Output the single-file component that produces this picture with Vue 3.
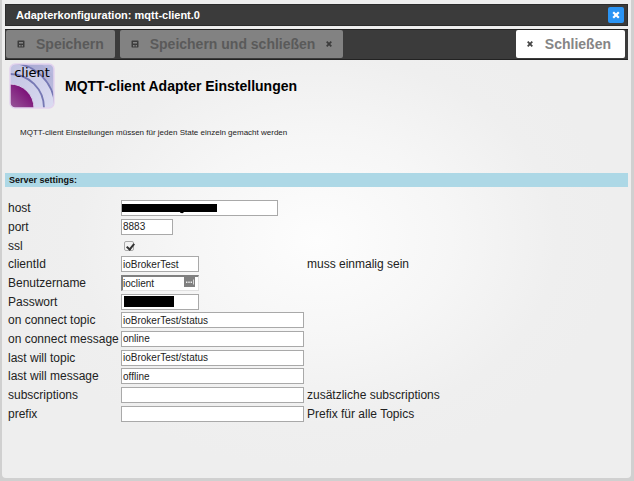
<script setup>
import { ref } from 'vue'

const fields = ref([
  { id: 'host', label: 'host', value: '', size: 'wide', mask: 'host' },
  { id: 'port', label: 'port', value: '8883', size: 'tiny' },
  { id: 'ssl', label: 'ssl', value: true, type: 'checkbox' },
  { id: 'clientId', label: 'clientId', value: 'ioBrokerTest', size: 'short', hint: 'muss einmalig sein' },
  { id: 'user', label: 'Benutzername', value: 'ioclient', size: 'short', manager: true },
  { id: 'pass', label: 'Passwort', value: '', size: 'short', type: 'password', mask: 'pass' },
  { id: 'onConnectTopic', label: 'on connect topic', value: 'ioBrokerTest/status', size: 'full' },
  { id: 'onConnectMessage', label: 'on connect message', value: 'online', size: 'full' },
  { id: 'lastWillTopic', label: 'last will topic', value: 'ioBrokerTest/status', size: 'full' },
  { id: 'lastWillMessage', label: 'last will message', value: 'offline', size: 'full' },
  { id: 'subscriptions', label: 'subscriptions', value: '', size: 'full', hint: 'zusätzliche subscriptions' },
  { id: 'prefix', label: 'prefix', value: '', size: 'full', hint: 'Prefix für alle Topics' }
])
</script>

<template>
  <div class="page">
    <section class="dialog">
      <header class="titlebar">
        <span>Adapterkonfiguration: mqtt-client.0</span>
        <button class="close" type="button" aria-label="Close">
          <svg width="8" height="8" viewBox="0 0 8 8"><path d="M1.2 1.2 6.8 6.8M6.8 1.2 1.2 6.8" stroke="#fff" stroke-width="2.2" /></svg>
        </button>
      </header>

      <div class="toolbar">
        <button class="tool" type="button" disabled>
          <svg class="icon" width="8" height="8" viewBox="0 0 8 8"><path d="M1 .5h6l.5.5v6l-.5.5H1L.5 7V1z" fill="#3c3c3c" /><path d="M2 2h4v1.6H2zM2 5h1.6v1.4H2zM4.6 5H6v1.4H4.6z" fill="#858585" /></svg>
          <span>Speichern</span>
        </button>
        <button class="tool" type="button" disabled>
          <svg class="icon" width="8" height="8" viewBox="0 0 8 8"><path d="M1 .5h6l.5.5v6l-.5.5H1L.5 7V1z" fill="#3c3c3c" /><path d="M2 2h4v1.6H2zM2 5h1.6v1.4H2zM4.6 5H6v1.4H4.6z" fill="#858585" /></svg>
          <span>Speichern und schließen</span>
          <svg class="icon" width="6" height="6" viewBox="0 0 6 6"><path d="M.7.7 5.3 5.3M5.3.7.7 5.3" stroke="#3c3c3c" stroke-width="1.8" /></svg>
        </button>
        <button class="tool leave" type="button">
          <svg class="icon" width="6" height="6" viewBox="0 0 6 6"><path d="M.7.7 5.3 5.3M5.3.7.7 5.3" stroke="#444" stroke-width="1.8" /></svg>
          <span>Schließen</span>
        </button>
      </div>

      <main class="content">
        <div class="heading">
          <svg class="logo" width="46" height="46" viewBox="0 0 46 46" role="img" aria-label="client">
            <defs>
              <clipPath id="tile"><rect x="1" y="1" width="44" height="44" rx="5" /></clipPath>
              <linearGradient id="outer" x1="0" y1="0" x2="1" y2="1">
                <stop offset="0" stop-color="#8f90c4" /><stop offset="1" stop-color="#d4d4ec" />
              </linearGradient>
              <linearGradient id="band" gradientUnits="userSpaceOnUse" x1="0" y1="8" x2="46" y2="46">
                <stop offset="0" stop-color="#c2c3e2" /><stop offset="1" stop-color="#dcddf2" />
              </linearGradient>
              <linearGradient id="core" gradientUnits="userSpaceOnUse" x1="1" y1="45" x2="18" y2="28">
                <stop offset="0" stop-color="#98589a" /><stop offset="1" stop-color="#7c1078" />
              </linearGradient>
            </defs>
            <g clip-path="url(#tile)">
              <rect width="46" height="46" fill="#b8b9de" />
              <circle cx="1" cy="45" r="54" fill="url(#outer)" />
              <circle cx="1" cy="45" r="45" fill="url(#band)" stroke="#7678b4" stroke-width="1.8" />
              <circle cx="1" cy="45" r="34" fill="url(#band)" stroke="#7678b4" stroke-width="1.8" />
              <circle cx="1" cy="45" r="24" fill="url(#core)" stroke="#d5cfe8" stroke-width="1" />
            </g>
            <rect x="1" y="1" width="44" height="44" rx="5" fill="none" stroke="#e3d3ee" stroke-width="1.5" />
            <text x="23" y="14" text-anchor="middle" class="logo-text">client</text>
          </svg>
          <h1>MQTT-client Adapter Einstellungen</h1>
        </div>

        <p class="note">MQTT-client Einstellungen müssen für jeden State einzeln gemacht werden</p>

        <h2>Server settings:</h2>

        <form class="settings" @submit.prevent>
          <div v-for="f in fields" :key="f.id" class="row">
            <label :for="f.id">{{ f.label }}</label>
            <div class="control">
              <input v-if="f.type === 'checkbox'" :id="f.id" v-model="f.value" class="check" type="checkbox" />
              <input v-else :id="f.id" v-model="f.value" :type="f.type || 'text'" class="box" :class="[f.size, { inset: f.manager }]" autocomplete="off" />
              <svg v-if="f.mask === 'host'" class="mask-host" width="95" height="10" viewBox="0 0 95 10"><path d="M0 0h95v8H62q-1 2-4 .5V8H0z" /></svg>
              <svg v-if="f.mask === 'pass'" class="mask-pass" width="50" height="11" viewBox="0 0 50 11"><path d="M0 0h50v11H0z" /></svg>
              <svg v-if="f.manager" class="manager" width="11" height="10" viewBox="0 0 11 10"><path d="M0 0h11v10H0z" fill="#808080" /><path d="M2 4.5h1.4v1.4H2zM4.3 4.5h1.4v1.4H4.3zM6.6 4.5H8v1.4H6.6zM9 2.5h.8v5H9z" fill="#eee" /></svg>
            </div>
            <span class="hint">{{ f.hint }}</span>
          </div>
        </form>
      </main>
    </section>
  </div>
</template>

<style>
body {
  margin: 0;
  background: #d0d0d0;
}
</style>

<style scoped>
* {
  box-sizing: border-box;
}

.page {
  display: flex;
  min-height: 100vh;
  padding: 0 3px 3px 2px;
  background: #d0d0d0;
  font-family: "Liberation Sans", Arial, sans-serif;
  color: #222;
}

.dialog {
  display: flex;
  flex: 1;
  flex-direction: column;
  padding: 4px 3px;
  border-radius: 0 0 4px 4px;
  background: radial-gradient(ellipse 300px 230px at 50% 50%, #fdfdfd, #f6f6f6 45%, #efefef 80%, #eee);
}

.titlebar {
  display: flex;
  align-items: center;
  justify-content: space-between;
  height: 22px;
  padding: 0 3px 0 10px;
  border: 1px solid #2c2c2c;
  background: #3b3b3b;
  color: #fff;
  font-size: 11px;
  font-weight: bold;
}

.close {
  display: flex;
  align-items: center;
  justify-content: center;
  width: 16px;
  height: 16px;
  padding: 0;
  border: 0;
  border-radius: 2px;
  background: #2a94f4;
}

.toolbar {
  display: flex;
  gap: 5px;
  margin-top: 3px;
  padding: 0 3px 1px 1px;
  background: #3b3b3b;
  border-top: 1px solid #222;
  border-bottom: 1px solid #222;
}

.tool {
  display: flex;
  align-items: center;
  gap: 11px;
  height: 28px;
  padding: 0 11px;
  border: 0;
  border-radius: 2px;
  background: #828282;
  color: #5a5a5a;
  font-family: inherit;
  font-size: 14px;
  font-weight: bold;
}

.icon {
  flex: none;
}

.leave {
  gap: 12px;
  margin-left: auto;
  padding-right: 14px;
  background: #fff;
  color: #858585;
}

.content {
  flex: 1;
}

.heading {
  display: flex;
  align-items: center;
  gap: 10px;
  padding: 3px 4px 0;
}

.logo-text {
  font-family: "DejaVu Sans", sans-serif;
  font-size: 13px;
  fill: #000;
}

h1 {
  margin: 0;
  color: #000;
  font-size: 14px;
  line-height: 20px;
}

.note {
  margin: 18px 0 0 15px;
  font-size: 8px;
  line-height: 12px;
}

h2 {
  margin: 34px 0 0;
  padding: 0 4px;
  background: #add8e6;
  color: #111;
  font-size: 9px;
  line-height: 14px;
}

.settings {
  display: grid;
  grid-auto-rows: 1fr;
  min-height: 224px;
  margin-top: 12px;
  padding: 0 3px;
  font-size: 12px;
}

.row {
  display: grid;
  grid-template-columns: 110px 183px 1fr;
  gap: 3px;
  align-items: center;
}

.row label {
  white-space: nowrap;
}

.control {
  display: flex;
  position: relative;
}

.box {
  height: 16px;
  padding: 0 1px;
  border: 1px solid #a9a9a9;
  background: #fff;
  color: #222;
  font-family: inherit;
  font-size: 10px;
}

.tiny { width: 52px; }
.short { width: 78px; }
.wide { width: 157px; }
.full { width: 183px; }

.inset {
  border-width: 2px 1px 1px 2px;
  border-color: #808080 #e0e0e0 #e0e0e0 #808080;
  padding: 0;
}

.check {
  width: 10px;
  height: 10px;
  margin: 0 3px;
  appearance: none;
  border: 1px solid #aaa;
  border-radius: 2px;
  background: #f2f2f2;
  position: relative;
}

.check:checked::after {
  content: "";
  position: absolute;
  left: 3px;
  top: 0;
  width: 3px;
  height: 6px;
  border: solid #333;
  border-width: 0 2px 2px 0;
  transform: rotate(40deg);
}

.mask-host,
.mask-pass,
.manager {
  position: absolute;
}

.mask-host { left: 1px; top: 4px; }
.mask-pass { left: 3px; top: 2px; }
.manager { left: 63px; top: 2px; }
</style>
